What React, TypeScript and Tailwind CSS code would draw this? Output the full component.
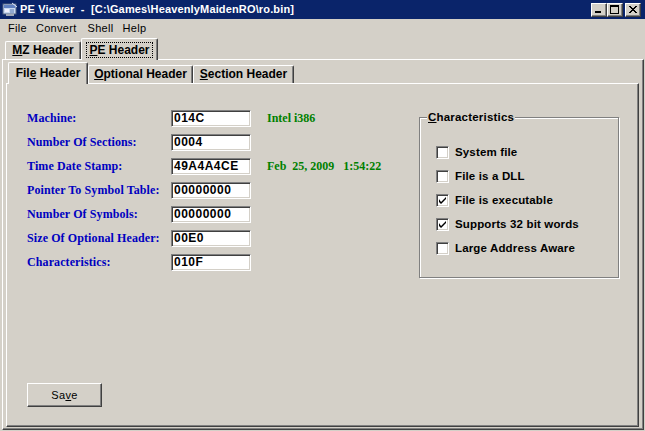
import React from "react";

const raised =
  "border border-t-white border-l-white border-r-[#404040] border-b-[#404040] shadow-[inset_-1px_-1px_#808080]";
const sunken =
  "border border-t-[#808080] border-l-[#808080] border-r-white border-b-white shadow-[inset_1px_1px_#404040,inset_-1px_-1px_#d4d0c8]";

function AppIcon() {
  return (
    <svg width="16" height="16" viewBox="0 0 16 16">
      <rect x="1" y="2" width="13" height="10" fill="#c8d8f0" stroke="#506080" />
      <rect x="2" y="3" width="11" height="3" fill="#6080c0" />
      <rect x="3" y="7" width="4" height="3" fill="#f0f0ff" />
      <rect x="8" y="7" width="4" height="4" fill="#90a8d0" />
      <rect x="4" y="12" width="8" height="2" fill="#a0a8b8" />
      <path d="M10 1 L15 5" stroke="#e0e8ff" strokeWidth="1" />
    </svg>
  );
}

function WinBtn({ kind }: { kind: "min" | "max" | "close" }) {
  return (
    <div className={`w-[16px] h-[14px] bg-[#d4d0c8] ${raised} flex items-center justify-center`}>
      {kind === "min" && (
        <svg width="10" height="9" viewBox="0 0 10 9">
          <rect x="1" y="6" width="6" height="2" fill="black" />
        </svg>
      )}
      {kind === "max" && (
        <svg width="10" height="9" viewBox="0 0 10 9">
          <rect x="0.5" y="0.5" width="8" height="8" fill="none" stroke="black" />
          <rect x="0" y="0" width="9" height="2" fill="black" />
        </svg>
      )}
      {kind === "close" && (
        <svg width="10" height="9" viewBox="0 0 10 9">
          <path d="M1 1 L8 8 M2 1 L9 8 M8 1 L1 8 M9 1 L2 8" stroke="black" strokeWidth="1" />
        </svg>
      )}
    </div>
  );
}

function Check({ checked }: { checked: boolean }) {
  return (
    <div className={`w-[13px] h-[13px] bg-white ${sunken} flex items-center justify-center shrink-0`}>
      {checked && (
        <svg width="7" height="7" viewBox="0 0 7 7">
          <path d="M0 2 L0 5 L2 7 L7 2 L7 0 L2 5 Z" fill="black" />
        </svg>
      )}
    </div>
  );
}

const rows: { label: string; value: string; extra?: string }[] = [
  { label: "Machine:", value: "014C", extra: "Intel i386" },
  { label: "Number Of Sections:", value: "0004" },
  { label: "Time Date Stamp:", value: "49A4A4CE", extra: "Feb  25, 2009   1:54:22" },
  { label: "Pointer To Symbol Table:", value: "00000000" },
  { label: "Number Of Symbols:", value: "00000000" },
  { label: "Size Of Optional Header:", value: "00E0" },
  { label: "Characteristics:", value: "010F" },
];

const checks: { label: string; checked: boolean }[] = [
  { label: "System file", checked: false },
  { label: "File is a DLL", checked: false },
  { label: "File is executable", checked: true },
  { label: "Supports 32 bit words", checked: true },
  { label: "Large Address Aware", checked: false },
];

const tabBase =
  "bg-[#d4d0c8] border-t border-l border-r border-t-white border-l-white border-r-[#404040] shadow-[inset_-1px_0_#808080] rounded-tl-[2px] rounded-tr-[2px] flex items-center justify-center font-bold text-[12px]";

export default function App() {
  return (
    <div className="w-[645px] h-[431px] bg-[#d4d0c8] overflow-hidden font-['Liberation_Sans',Arial,sans-serif] text-[11px] leading-[13px] text-black select-none">
      {/* Title bar */}
      <div className="h-[19px] bg-[#0a246a] flex items-center pl-[2px] pr-[4px]">
        <AppIcon />
        <span className="ml-[2px] text-white font-bold text-[11px] tracking-[0.15px] whitespace-pre">
          PE Viewer  -  [C:\Games\HeavenlyMaidenRO\ro.bin]
        </span>
        <div className="ml-auto flex items-center">
          <WinBtn kind="min" />
          <WinBtn kind="max" />
          <div className="w-[2px]" />
          <WinBtn kind="close" />
        </div>
      </div>

      {/* Menu bar */}
      <div className="h-[19px] flex items-center pl-[8px] tracking-[0.3px]">
        <span>File</span>
        <span className="ml-[9px]">Convert</span>
        <span className="ml-[11px]">Shell</span>
        <span className="ml-[9px]">Help</span>
      </div>

      {/* Outer tabs */}
      <div className="h-[21px] flex pl-[5px]">
        <div className={`${tabBase} self-end h-[18px] w-[76px]`}>
          <span>
            <u>M</u>Z Header
          </span>
        </div>
        <div className={`${tabBase} self-start h-[22px] w-[77px] relative z-10`}>
          <span className="border border-dotted border-black px-[2px] leading-[14px]">
            <u>P</u>E Header
          </span>
        </div>
      </div>

      {/* Outer panel */}
      <div className={`ml-[2px] w-[642px] h-[371px] bg-[#d4d0c8] ${raised} pt-[2px] pl-[3px]`}>
        {/* Inner tabs */}
        <div className="h-[21px] flex pl-[2px]">
          <div className={`${tabBase} self-start h-[22px] w-[80px] relative z-10`}>
            <span>
              Fil<u>e</u> Header
            </span>
          </div>
          <div className={`${tabBase} self-end h-[18px] w-[105px]`}>
            <span>
              <u>O</u>ptional Header
            </span>
          </div>
          <div className={`${tabBase} self-end h-[18px] w-[101px]`}>
            <span>
              <u>S</u>ection Header
            </span>
          </div>
        </div>

        {/* Inner panel */}
        <div className={`w-[633px] h-[344px] bg-[#d4d0c8] ${raised} flex flex-col pt-[26px] pl-[20px] pb-[19px]`}>
          <div className="flex">
            <div className="w-[392px] flex flex-col gap-[7px]">
              {rows.map((r) => (
                <div key={r.label} className="h-[17px] flex items-center">
                  <div className="w-[144px] font-['Liberation_Serif',serif] font-bold text-[12px] tracking-[0.1px] text-[#0000c0]">
                    {r.label}
                  </div>
                  <div className={`w-[80px] h-[17px] bg-white ${sunken} flex items-center pl-[2px] font-bold text-[12px] tracking-[0.5px]`}>
                    {r.value}
                  </div>
                  {r.extra && (
                    <div className="ml-[16px] font-['Liberation_Serif',serif] font-bold text-[12px] text-[#008000] whitespace-pre">
                      {r.extra}
                    </div>
                  )}
                </div>
              ))}
            </div>

            <div className="mt-[7px] w-[200px] h-[161px] relative border border-[#808080] shadow-[inset_1px_1px_#fff,1px_1px_#fff] pt-[28px] pl-[16px] flex flex-col gap-[11px]">
              <div className="absolute left-[7px] -top-[7px] bg-[#d4d0c8] px-[1px] font-bold text-[11.5px] tracking-[0.2px]">
                <u>C</u>haracteristics
              </div>
              {checks.map((c) => (
                <div key={c.label} className="h-[13px] flex items-center">
                  <Check checked={c.checked} />
                  <span className="ml-[6px] font-bold text-[11.5px] tracking-[0.15px]">{c.label}</span>
                </div>
              ))}
            </div>
          </div>

          <div className="mt-auto">
            <button className={`w-[75px] h-[24px] bg-[#d4d0c8] ${raised} flex items-center justify-center text-[11px] tracking-[0.3px]`}>
              <span>
                Sa<u>v</u>e
              </span>
            </button>
          </div>
        </div>
      </div>
    </div>
  );
}
